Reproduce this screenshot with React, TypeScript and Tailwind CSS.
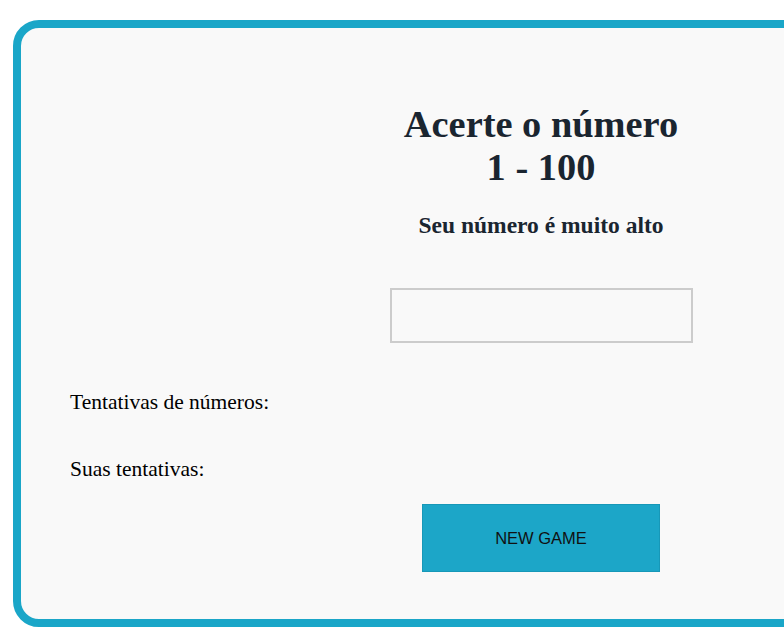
export default function App() {
  return (
    <div className="h-[632px] w-full overflow-hidden bg-white pl-[13px] pt-[20px]">
      <div
        className="flex h-[607px] w-[1056px] flex-col rounded-[26px] border-[8px] border-[#1aa6c8] bg-[#f9f9f9]"
        style={{ fontFamily: '"Liberation Serif", "Times New Roman", serif' }}
      >
        {/* Header */}
        <h1 className="mt-[75px] text-center text-[38.4px] font-bold leading-[43px] text-[#1a2530]">
          Acerte o número
          <br />
          1 - 100
        </h1>
        <p className="mt-[24px] text-center text-[23.5px] font-bold leading-[24px] text-[#1a2530]">
          Seu número é muito alto
        </p>

        {/* Guess input */}
        <input
          type="text"
          className="mx-auto mt-[51px] block h-[55px] w-[303px] border-2 border-[#cccccc] bg-[#f9f9f9] px-3 text-[20px] outline-none"
        />

        {/* Attempts */}
        <p className="mt-[47px] pl-[49px] text-[21.5px] leading-[24px] text-black">Tentativas de números:</p>
        <p className="mt-[43px] pl-[49px] text-[21.5px] leading-[24px] text-black">Suas tentativas:</p>

        <button
          className="mx-auto mt-[23px] h-[68px] w-[238px] border border-[#1798b8] bg-[#1ca6c8] text-[16.5px] text-[#111]"
          style={{ fontFamily: '"Liberation Sans", Arial, sans-serif' }}
        >
          NEW GAME
        </button>
      </div>
    </div>
  )
}
